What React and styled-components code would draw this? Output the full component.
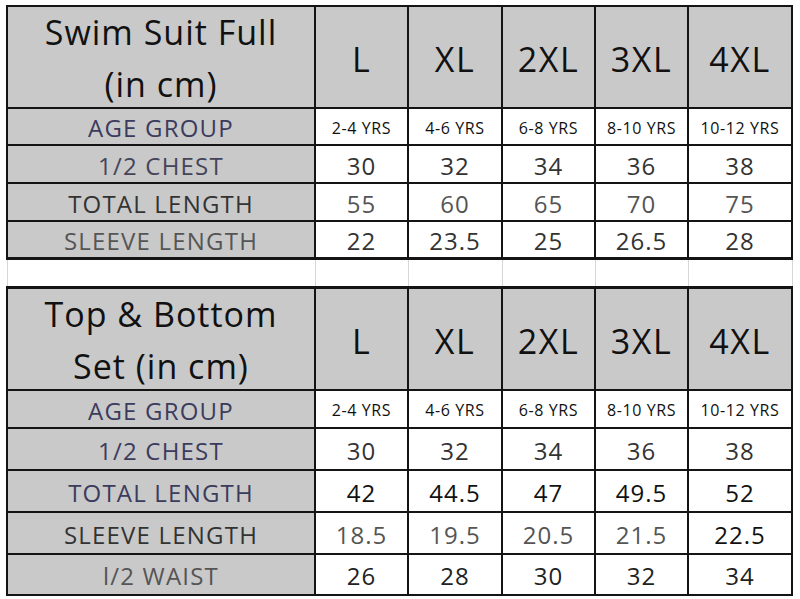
import React from "react";
import styled, { createGlobalStyle } from "styled-components";

const GlobalStyle = createGlobalStyle`
  body {
    margin: 0;
    background: #fff;
    font-family: "Open Sans", "Noto Sans", sans-serif;
  }
`;

const COLS = "306px 91px 92px 91px 91px 102px";
const SIZES = ["L", "XL", "2XL", "3XL", "4XL"];
const NAVY = "#3b3b5e";

const swimRows = [
  { label: "AGE GROUP", labelColor: NAVY, age: true, color: "#111",
    values: ["2-4 YRS", "4-6 YRS", "6-8 YRS", "8-10 YRS", "10-12 YRS"] },
  { label: "1/2 CHEST", labelColor: "#44445a", color: "#333",
    values: ["30", "32", "34", "36", "38"] },
  { label: "TOTAL LENGTH", labelColor: "#333", color: "#555",
    values: ["55", "60", "65", "70", "75"] },
  { label: "SLEEVE LENGTH", labelColor: "#555", color: "#333",
    values: ["22", "23.5", "25", "26.5", "28"] },
];

const setRows = [
  { label: "AGE GROUP", labelColor: NAVY, age: true, color: "#111",
    values: ["2-4 YRS", "4-6 YRS", "6-8 YRS", "8-10 YRS", "10-12 YRS"] },
  { label: "1/2 CHEST", labelColor: NAVY, color: "#333",
    values: ["30", "32", "34", "36", "38"] },
  { label: "TOTAL LENGTH", labelColor: NAVY, color: "#111",
    values: ["42", "44.5", "47", "49.5", "52"] },
  { label: "SLEEVE LENGTH", labelColor: "#333", color: "#555",
    values: ["18.5", "19.5", "20.5", "21.5", "22.5"], lastColor: "#111" },
  { label: "l/2 WAIST", labelColor: "#555", color: "#222",
    values: ["26", "28", "30", "32", "34"] },
];

export default function App() {
  return (
    <>
      <GlobalStyle />
      <Page>
        <SizeTable
          title={["Swim Suit Full", "(in cm)"]}
          rows={swimRows}
          heights="100px 35px 36px 36px 35px"
          top="2px"
          bottom="3px"
        />
        <Spacer>
          {SIZES.concat("").map((s, i) => (
            <SpacerCell key={i} />
          ))}
        </Spacer>
        <SizeTable
          title={["Top & Bottom", "Set (in cm)"]}
          rows={setRows}
          heights="100px 36px 40px 40px 40px 39px"
          top="3px"
          bottom="2px"
        />
      </Page>
    </>
  );
}

function SizeTable({ title, rows, heights, top, bottom }) {
  return (
    <Table $rows={heights} $top={top} $bottom={bottom}>
      <TitleCell>
        {title.map((t) => (
          <span key={t}>{t}</span>
        ))}
      </TitleCell>
      {SIZES.map((s) => (
        <SizeCell key={s}>{s}</SizeCell>
      ))}
      {rows.map((r) => (
        <React.Fragment key={r.label}>
          <LabelCell $color={r.labelColor}>{r.label}</LabelCell>
          {r.values.map((v, i) => (
            <ValueCell
              key={i}
              $age={r.age}
              $color={i === r.values.length - 1 && r.lastColor ? r.lastColor : r.color}
            >
              {v}
            </ValueCell>
          ))}
        </React.Fragment>
      ))}
    </Table>
  );
}

const Page = styled.div`
  padding: 5px 0 0 6px;
  width: 787px;
`;

const Table = styled.div`
  display: grid;
  grid-template-columns: ${COLS};
  grid-template-rows: ${(p) => p.$rows};
  gap: 2px;
  background: #141414;
  border: 2px solid #141414;
  border-top-width: ${(p) => p.$top};
  border-bottom-width: ${(p) => p.$bottom};
`;

const Cell = styled.div`
  display: flex;
  align-items: center;
  justify-content: center;
  background: #fff;
  white-space: nowrap;
`;

const TitleCell = styled(Cell)`
  flex-direction: column;
  background: #c9c9c9;
  color: #111;
  font-size: 34px;
  letter-spacing: 1px;
  line-height: 52px;
  padding-top: 2px;
  overflow: hidden;
`;

const SizeCell = styled(Cell)`
  background: #c9c9c9;
  color: #111;
  font-size: 34px;
  letter-spacing: 1.5px;
  padding-top: 4px;
`;

const LabelCell = styled(Cell)`
  background: #c9c9c9;
  color: ${(p) => p.$color};
  font-size: 24px;
  letter-spacing: 1.2px;
  padding-top: 2px;
`;

const ValueCell = styled(Cell)`
  color: ${(p) => p.$color};
  font-size: ${(p) => (p.$age ? "16px" : "24px")};
  letter-spacing: ${(p) => (p.$age ? "0.6px" : "1px")};
  padding-top: 2px;
`;

const Spacer = styled.div`
  display: grid;
  grid-template-columns: ${COLS};
  gap: 2px;
  height: 26px;
  border-left: 1px solid #d6d6d6;
  margin-left: 1px;
`;

const SpacerCell = styled.div`
  border-right: 1px solid #d6d6d6;
  margin-right: -2px;
`;
